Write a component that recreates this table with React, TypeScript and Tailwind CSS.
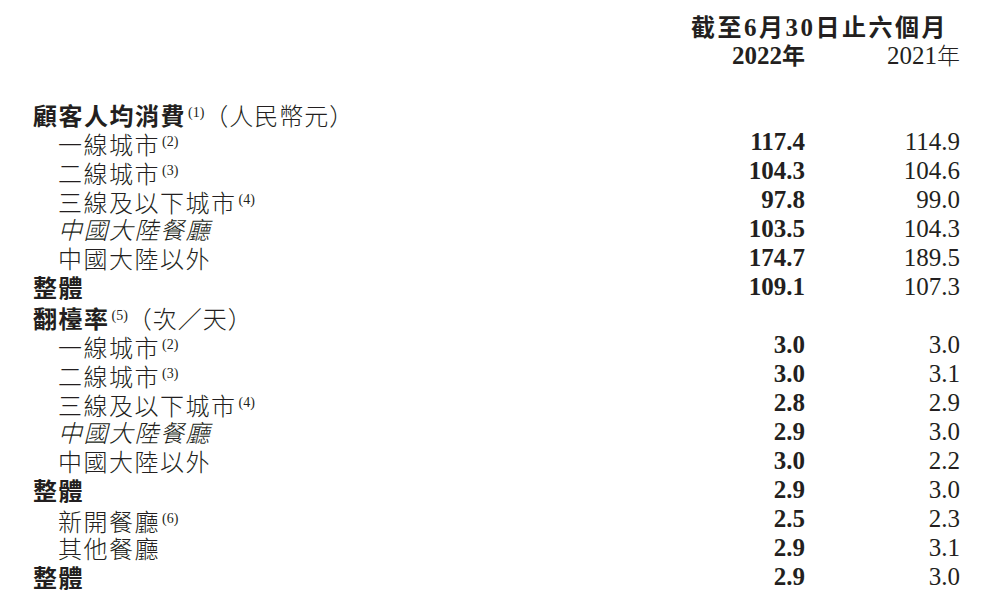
import React from "react"

type Row = {
  label: string
  note?: string
  suffix?: string
  level: 0 | 1
  italic?: boolean
  a?: string
  b?: string
}

const rows: Row[] = [
  { label: "顧客人均消費", note: "(1)", suffix: "（人民幣元）", level: 0 },
  { label: "一線城市", note: "(2)", level: 1, a: "117.4", b: "114.9" },
  { label: "二線城市", note: "(3)", level: 1, a: "104.3", b: "104.6" },
  { label: "三線及以下城市", note: "(4)", level: 1, a: "97.8", b: "99.0" },
  { label: "中國大陸餐廳", level: 1, italic: true, a: "103.5", b: "104.3" },
  { label: "中國大陸以外", level: 1, a: "174.7", b: "189.5" },
  { label: "整體", level: 0, a: "109.1", b: "107.3" },
  { label: "翻檯率", note: "(5)", suffix: "（次／天）", level: 0 },
  { label: "一線城市", note: "(2)", level: 1, a: "3.0", b: "3.0" },
  { label: "二線城市", note: "(3)", level: 1, a: "3.0", b: "3.1" },
  { label: "三線及以下城市", note: "(4)", level: 1, a: "2.8", b: "2.9" },
  { label: "中國大陸餐廳", level: 1, italic: true, a: "2.9", b: "3.0" },
  { label: "中國大陸以外", level: 1, a: "3.0", b: "2.2" },
  { label: "整體", level: 0, a: "2.9", b: "3.0" },
  { label: "新開餐廳", note: "(6)", level: 1, a: "2.5", b: "2.3" },
  { label: "其他餐廳", level: 1, a: "2.9", b: "3.1" },
  { label: "整體", level: 0, a: "2.9", b: "3.0" },
]

const cjk = "font-['Noto_Sans_CJK_TC','Noto_Sans_CJK_SC',sans-serif]"
const serif = "font-['Liberation_Serif','Noto_Sans_CJK_TC',serif]"

export default function App() {
  return (
    <div className="w-[990px] h-[608px] bg-white text-[#231f20] overflow-hidden pl-[33px] pr-[30px] pt-[12px]">
      <div className="grid grid-cols-[1fr_120px_155px]">
        <div />
        <div className={`col-span-2 text-center pr-[6px] h-[28px] leading-[28px] text-[24px] font-bold tracking-[2.5px] ${cjk}`}>
          截至<span className={serif + " text-[25px]"}>6</span>月<span className={serif + " text-[25px]"}>30</span>日止六個月
        </div>
        <div />
        <div className={`text-right h-[28px] leading-[28px] text-[25px] font-bold ${serif}`}>
          2022<span className={cjk + " text-[23px]"}>年</span>
        </div>
        <div className={`text-right h-[28px] leading-[28px] text-[25px] ${serif}`}>
          2021<span className={cjk + " text-[23px] font-light"}>年</span>
        </div>
      </div>

      <div className="grid grid-cols-[1fr_120px_155px] mt-[30px]">
        {rows.map((r, i) => (
          <React.Fragment key={i}>
            <div
              className={`h-[29px] leading-[29px] text-[24px] tracking-[1.5px] whitespace-nowrap ${cjk} ${
                r.level === 0 ? "font-bold" : "pl-[25px] font-light"
              } ${r.italic ? "italic" : ""}`}
            >
              {r.label}
              {r.note && (
                <span className={`${serif} text-[14px] tracking-normal align-[8px] font-normal ml-[2px]`}>
                  {r.note}
                </span>
              )}
              {r.suffix && <span className="font-light tracking-[1px]">{r.suffix}</span>}
            </div>
            <div className={`h-[29px] leading-[29px] text-right text-[25px] font-bold ${serif}`}>{r.a}</div>
            <div className={`h-[29px] leading-[29px] text-right text-[25px] ${serif}`}>{r.b}</div>
          </React.Fragment>
        ))}
      </div>
    </div>
  )
}
